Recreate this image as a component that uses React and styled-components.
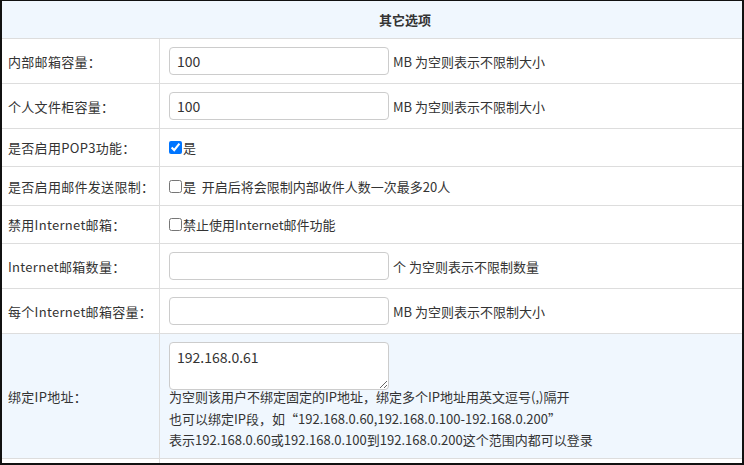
import styled, {createGlobalStyle} from "styled-components";

const GlobalStyle = createGlobalStyle`
  html, body {
    margin: 0;
    padding: 0;
    background: #fff;
  }
  body {
    font-family: "Microsoft YaHei", "Noto Sans CJK SC", "Noto Sans", sans-serif;
    color: #333;
    font-size: 13px;
  }
`

const Frame = styled.div`
  box-sizing: border-box;
  width: 744px;
  height: 465px;
  border-style: solid;
  border-color: #111;
  border-width: 1px 2px 2px 2px;
  overflow: hidden;
`

const Header = styled.div`
  height: 37px;
  border-bottom: 1px solid #ddd;
  background: #f0f7fe;
  display: flex;
  align-items: center;
  justify-content: center;
  padding-left: 66px;
  font-weight: bold;
  font-size: 13px;
`

const Row = styled.div`
  display: flex;
  height: ${p => p.$h}px;
  border-bottom: 1px solid #ddd;
  background: ${p => p.$tint ? "#f0f7fe" : "#fff"};
`

const Label = styled.div`
  box-sizing: border-box;
  width: 158px;
  flex: none;
  border-right: 1px solid #ddd;
  padding-left: 6px;
  display: flex;
  align-items: center;
  white-space: nowrap;
  letter-spacing: 0.3px;
`

const Value = styled.div`
  flex: 1;
  padding-left: 9px;
  display: flex;
  align-items: ${p => p.$top ? "flex-start" : "center"};
  flex-direction: ${p => p.$top ? "column" : "row"};
  padding-top: ${p => p.$top ? "8px" : "0"};
  white-space: nowrap;
`

const TextInput = styled.input`
  box-sizing: border-box;
  width: 220px;
  height: 28px;
  border: 1px solid #ccc;
  border-radius: 4px;
  padding: 0 7px;
  font: inherit;
  font-size: 14px;
  color: #333;
  outline: none;
  margin-right: 4px;
`

const Area = styled.textarea`
  display: block;
  box-sizing: border-box;
  width: 220px;
  height: 48px;
  border: 1px solid #ccc;
  border-radius: 4px;
  padding: 4px 7px;
  font: inherit;
  font-size: 14px;
  color: #333;
  outline: none;
  resize: both;
  margin: 0;
`

const Check = styled.input`
  margin: 0 1px 0 0;
  width: 13px;
  height: 13px;
`

const Help = styled.div`
  line-height: 21.5px;
  font-size: 13px;
  margin-top: -4px;
`

export default function App() {
    return (
        <>
            <GlobalStyle/>
            <Frame>
                <Header>其它选项</Header>
                <Row $h={44}>
                    <Label>内部邮箱容量：</Label>
                    <Value><TextInput defaultValue="100"/>MB 为空则表示不限制大小</Value>
                </Row>
                <Row $h={44}>
                    <Label>个人文件柜容量：</Label>
                    <Value><TextInput defaultValue="100"/>MB 为空则表示不限制大小</Value>
                </Row>
                <Row $h={37}>
                    <Label>是否启用POP3功能：</Label>
                    <Value><Check type="checkbox" defaultChecked/>是</Value>
                </Row>
                <Row $h={38}>
                    <Label>是否启用邮件发送限制：</Label>
                    <Value><Check type="checkbox"/>是&nbsp;&nbsp;开启后将会限制内部收件人数一次最多20人</Value>
                </Row>
                <Row $h={37}>
                    <Label>禁用Internet邮箱：</Label>
                    <Value><Check type="checkbox"/>禁止使用Internet邮件功能</Value>
                </Row>
                <Row $h={44}>
                    <Label>Internet邮箱数量：</Label>
                    <Value><TextInput/>个 为空则表示不限制数量</Value>
                </Row>
                <Row $h={44}>
                    <Label>每个Internet邮箱容量：</Label>
                    <Value><TextInput/>MB 为空则表示不限制大小</Value>
                </Row>
                <Row $h={124} $tint>
                    <Label>绑定IP地址：</Label>
                    <Value $top>
                        <Area defaultValue="192.168.0.61"/>
                        <Help>
                            为空则该用户不绑定固定的IP地址，绑定多个IP地址用英文逗号(,)隔开<br/>
                            也可以绑定IP段，如“192.168.0.60,192.168.0.100-192.168.0.200”<br/>
                            表示192.168.0.60或192.168.0.100到192.168.0.200这个范围内都可以登录
                        </Help>
                    </Value>
                </Row>
                <Row $h={10}>
                    <Label/>
                    <Value/>
                </Row>
            </Frame>
        </>
    )
}
